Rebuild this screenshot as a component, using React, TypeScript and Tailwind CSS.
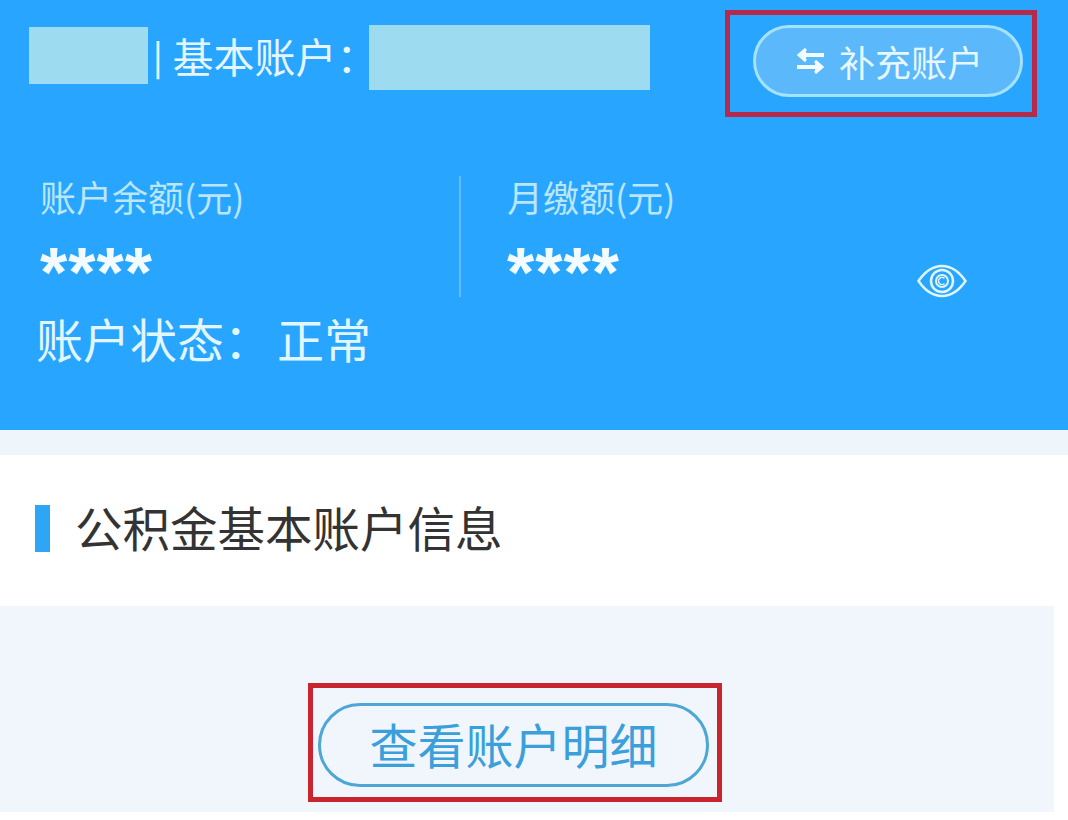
export default function App() {
  return (
    <div className="w-[1068px] h-[820px] overflow-hidden bg-white font-['Noto_Sans_CJK_SC','Noto_Sans',sans-serif]">
      <div className="h-[430px] bg-[#28a5ff] flex flex-col">
        <div className="flex items-start pl-[29px] pr-[31px] pt-[10px] h-[117px]">
          <div className="flex items-start gap-[5px] mt-[15px] h-[65px]">
            <div className="w-[119px] h-[57px] mt-[2px] bg-[#9ddcf0]" />
            <div className="w-[211px] h-[65px] -mt-[2px] flex items-center whitespace-nowrap text-[#e6f6ff]">
              <span className="text-[34px] leading-none font-medium">|</span>
              <span className="ml-[10px] text-[41px] leading-none">基本账户：</span>
            </div>
            <div className="w-[281px] h-[65px] bg-[#9ddcf0]" />
          </div>
          <div className="ml-auto w-[312px] h-[107px] border-[5px] border-[#b52a4a] pl-[23px] pt-[10px]">
            <div className="w-[270px] h-[72px] rounded-full border-[3px] border-[#a5e2fb] bg-[#5ab8fb] flex items-center justify-center gap-[14px] pl-[3px] text-[36px] leading-none text-[#e6f7ff]">
              <svg width="29" height="26" viewBox="0 0 29 26" fill="none" stroke="#f2fbff" strokeWidth="4">
                <path d="M28 7H6" />
                <path d="M10 1 3 7l7 6" strokeWidth="3" fill="#f2fbff" />
                <path d="M1 19h22" />
                <path d="M19 13l7 6-7 6" strokeWidth="3" fill="#f2fbff" />
              </svg>
              <span>补充账户</span>
            </div>
          </div>
        </div>
        <div className="flex mt-[59px] h-[121px]">
          <div className="w-[461px] pl-[40px] border-r-2 border-[#62bdf7] flex flex-col">
            <span className="text-[36px] leading-[40px] text-[#b9e6f8]">账户余额(元)</span>
            <span className="text-[70px] leading-[48px] h-[48px] mt-[33px] tracking-[1px] font-bold text-[#f2fbff] font-['Liberation_Sans',sans-serif]">****</span>
          </div>
          <div className="pl-[46px] flex flex-col">
            <span className="text-[36px] leading-[40px] text-[#b9e6f8]">月缴额(元)</span>
            <span className="text-[70px] leading-[48px] h-[48px] mt-[33px] tracking-[1px] font-bold text-[#f2fbff] font-['Liberation_Sans',sans-serif]">****</span>
          </div>
          <svg className="ml-auto mr-[101px] mt-[88px]" width="50" height="34" viewBox="0 0 50 34" fill="none" stroke="#dff5ff" strokeWidth="2.5">
            <path d="M1.5 17C9 6 17 2 25 2s16 4 23.500 15C41 28 33 32 25 32S9 28 1.500 17Z" />
            <circle cx="25" cy="17" r="11" />
            <circle cx="25" cy="17" r="6" strokeWidth="2" />
            <path d="M27.500 14.500a3.500 3.500 0 1 0 0 5" strokeWidth="1.500" />
          </svg>
        </div>
        <div className="pl-[36px] mt-[12px] text-[47px] leading-[66px] text-[#e2f6fd] whitespace-nowrap font-['Liberation_Sans','Noto_Sans_CJK_SC',sans-serif]">账户状态：<span className="ml-[6px]">正常</span></div>
      </div>
      <div className="h-[25px] bg-[#eef5fb]" />
      <div className="h-[151px] flex items-center pl-[35px] pb-[5px]">
        <div className="w-[15px] h-[47px] bg-[#2fa5f5]" />
        <span className="ml-[25px] -mt-[3px] text-[47.500px] leading-none text-[#333333] whitespace-nowrap">公积金基本账户信息</span>
      </div>
      <div className="w-[1054px] h-[206px] bg-[#f1f6fd] pt-[77px] pl-[308px]">
        <div className="w-[414px] h-[119px] border-[5px] border-[#c9252f] pl-[5px] pt-[15px]">
          <div className="w-[391px] h-[84px] rounded-full border-[3px] border-[#4ea6d6] flex items-center justify-center pb-[4px] text-[48px] leading-none text-[#3a9fdb] whitespace-nowrap">
            查看账户明细
          </div>
        </div>
      </div>
    </div>
  );
}
